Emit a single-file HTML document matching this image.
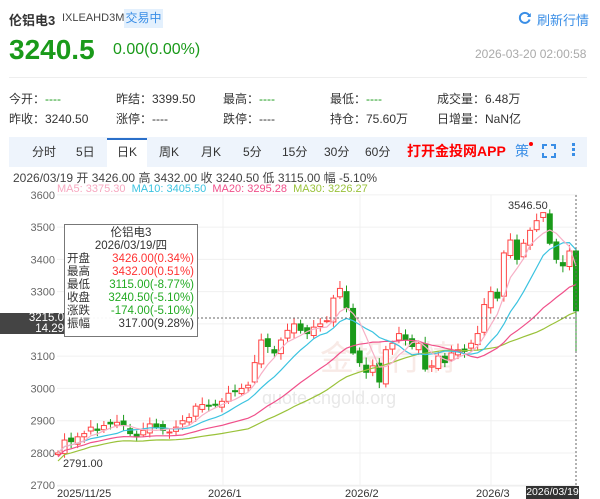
<!DOCTYPE html>
<html><head><meta charset="utf-8"><style>
body{margin:0;width:600px;height:499px;overflow:hidden;background:#fff;font-family:"Liberation Sans","Noto Sans CJK SC",sans-serif;position:relative}
.a{position:absolute;white-space:nowrap}
.g{color:#1a9a1a}
.lbl{font-size:12px;color:#333}
.tab{position:absolute;top:143px;font-size:12px;color:#333}
</style></head><body>
<div class="a" style="left:9px;top:10px;font-size:13px;font-weight:bold;color:#333">伦铝电3</div>
<div class="a" style="left:62px;top:12px;font-size:11px;color:#444">IXLEAHD3M</div>
<div class="a" style="left:124px;top:9px;width:39px;height:19px;background:#e3f0fd;color:#3a8ee6;font-size:12px;line-height:19px;text-align:center">交易中</div>
<svg class="a" style="left:518px;top:11px" width="14" height="14" viewBox="0 0 14 14"><path d="M11.5 5 A5 5 0 1 0 11.6 8.5" fill="none" stroke="#3a8ee6" stroke-width="2"/><path d="M12.8 2 L12.8 6 L8.8 6Z" fill="#3a8ee6"/></svg>
<div class="a" style="left:537px;top:10px;font-size:13px;color:#3a8ee6">刷新行情</div>
<div class="a g" style="left:9px;top:34px;font-size:28px;font-weight:bold">3240.5</div>
<div class="a g" style="left:113px;top:41px;font-size:16px">0.00(0.00%)</div>
<div class="a" style="left:475px;top:47px;font-size:12px;color:#aaa">2026-03-20 02:00:58</div>
<div class="a" style="left:9px;top:77px;width:578px;border-top:1px solid #eee"></div>
<div class="a lbl" style="left:9px;top:90px">今开：<span class="g">----</span></div>
<div class="a lbl" style="left:116px;top:90px">昨结：3399.50</div>
<div class="a lbl" style="left:223px;top:90px">最高：<span class="g">----</span></div>
<div class="a lbl" style="left:330px;top:90px">最低：<span class="g">----</span></div>
<div class="a lbl" style="left:437px;top:90px">成交量：6.48万</div>
<div class="a lbl" style="left:9px;top:110px">昨收：3240.50</div>
<div class="a lbl" style="left:116px;top:110px">涨停：----</div>
<div class="a lbl" style="left:223px;top:110px">跌停：----</div>
<div class="a lbl" style="left:330px;top:110px">持仓：75.60万</div>
<div class="a lbl" style="left:437px;top:110px">日增量：NaN亿</div>
<div class="a" style="left:9px;top:137px;width:578px;height:30px;background:#eef4fc"></div>
<div class="a" style="left:107px;top:138px;width:40px;height:29px;background:#fff;border-top:2px solid #2a6fc9;box-sizing:border-box"></div>
<div class="tab" style="left:32px">分时</div>
<div class="tab" style="left:76px">5日</div>
<div class="tab" style="left:117px">日K</div>
<div class="tab" style="left:159px">周K</div>
<div class="tab" style="left:201px">月K</div>
<div class="tab" style="left:243px">5分</div>
<div class="tab" style="left:282px">15分</div>
<div class="tab" style="left:324px">30分</div>
<div class="tab" style="left:365px">60分</div>
<div class="a" style="left:407px;top:141px;font-size:14px;font-weight:bold;color:#f00">打开金投网APP</div>
<div class="a" style="left:515px;top:141px;font-size:14px;color:#3a8ee6">策</div>
<div class="a" style="left:529px;top:142px;width:4px;height:4px;border-radius:2px;background:#f00"></div>
<svg class="a" style="left:542px;top:144px" width="14" height="14"><path d="M1 5V1H5M9 1H13V5M13 9V13H9M5 13H1V9" fill="none" stroke="#3a8ee6" stroke-width="2"/></svg>
<div class="a" style="left:572px;top:143px;width:3px;height:3px;background:#3a8ee6;box-shadow:0 5px #3a8ee6,0 10px #3a8ee6"></div>
<div class="a" style="left:13px;top:169px;font-size:12px;color:#444">2026/03/19 开 3426.00 高 3432.00 收 3240.50 低 3115.00 幅 -5.10%</div>
<div class="a" style="left:57px;top:183px;font-size:11px"><span style="color:#f7a8c0">MA5: 3375.30</span>&nbsp;&nbsp;<span style="color:#3bc3e0">MA10: 3405.50</span>&nbsp;&nbsp;<span style="color:#f0508a">MA20: 3295.28</span>&nbsp;&nbsp;<span style="color:#9ac23a">MA30: 3226.27</span></div>
<svg class="a" style="left:0;top:0" width="600" height="499" id="ch"></svg>
<div class="a" style="left:64px;top:224px;width:132px;height:111px;background:rgba(255,255,255,.95);border:1px solid #777;font-size:11.5px;line-height:13px;color:#333">
<div style="text-align:center;margin-top:2px">伦铝电3</div>
<div style="text-align:center">2026/03/19/四</div>
<div style="padding:0 3px 0 2px">
<div>开盘<span style="float:right;color:#f33">3426.00(0.34%)</span></div>
<div>最高<span style="float:right;color:#f33">3432.00(0.51%)</span></div>
<div>最低<span style="float:right;color:#2a2">3115.00(-8.77%)</span></div>
<div>收盘<span style="float:right;color:#2a2">3240.50(-5.10%)</span></div>
<div>涨跌<span style="float:right;color:#2a2">-174.00(-5.10%)</span></div>
<div>振幅<span style="float:right">317.00(9.28%)</span></div>
</div></div>
<div class="a" style="left:0;top:313px;width:64px;height:21px;background:#444;color:#fff;font-size:11.5px;line-height:10.5px;text-align:right">3215.0<br>14.29</div>
<div class="a" style="left:526px;top:486px;width:53px;height:13px;background:#333;color:#fff;font-size:10.5px;line-height:13px;text-align:center;overflow:hidden">2026/03/19</div>
<script>
var s=document.getElementById('ch'),h='';
function Y(p){return 251+(3426-p)*0.3226}
h+='<text x="320" y="370" font-size="34" fill="#f3d6cf" opacity=".5" font-family="Noto Sans CJK SC">金投行情</text>';
h+='<text x="262" y="404" font-size="18" fill="#e8e8e8" font-family="Liberation Sans">quote.cngold.org</text>';
[3600,3500,3400,3300,3200,3100,3000,2900,2800,2700].forEach(function(p){var y=Y(p);h+='<line x1="57" x2="577" y1="'+y+'" y2="'+y+'" stroke="#f0f0f0"/><text x="55" y="'+(y+4)+'" font-size="11" fill="#666" text-anchor="end">'+p+'</text>'});
[223,360,491].forEach(function(x){h+='<line x1="'+x+'" x2="'+x+'" y1="195" y2="486" stroke="#f0f0f0"/>'});
h+='<line x1="57" x2="577" y1="486" y2="486" stroke="#eee"/>';
var C=[2800,2840,2835,2850,2860,2880,2870,2885,2890,2895,2885,2860,2850,2870,2890,2880,2870,2865,2880,2900,2910,2945,2950,2945,2950,2960,2985,2990,3000,3010,3080,3150,3130,3110,3150,3180,3200,3180,3170,3190,3200,3210,3280,3310,3250,3110,3080,3050,3070,3020,3120,3140,3170,3150,3130,3140,3060,3070,3100,3080,3110,3120,3115,3140,3170,3260,3300,3280,3420,3460,3400,3450,3490,3520,3545,3450,3400,3380,3426,3240.5];
var O=[2795];for(var i=1;i<C.length;i++)O.push(C[i-1]+((i*37)%11-5)*2);
O[O.length-1]=3426;
var n=C.length,st=(576-58)/(n-1);
function ma(k){var pts=[];for(var i=0;i<n;i++){var a=Math.max(0,i-k+1),t=0;for(var j=a;j<=i;j++)t+=C[j];pts.push((58+i*st).toFixed(1)+','+Y(t/(i-a+1)-(k>20?25:k>10?12:0)).toFixed(1))}return pts.join(' ')}
for(i=0;i<n;i++){var x=58+i*st,o=O[i],c=C[i],up=c>=o,hi=Math.max(o,c)+8+(i*13)%17,lo=Math.min(o,c)-6-(i*7)%15;
if(i==n-1){hi=3432;lo=3115}if(i==74)hi=3546;if(i==0)lo=2791;
var col=up?'#f44':'#1a9a1a',t=Y(Math.max(o,c)),b=Y(Math.min(o,c));if(b-t<1)b=t+1;
h+='<line x1="'+x+'" x2="'+x+'" y1="'+Y(hi)+'" y2="'+Y(lo)+'" stroke="'+col+'"/>';
h+='<rect x="'+(x-2.5)+'" y="'+t+'" width="5" height="'+(b-t)+'" fill="'+(up?'#fff':col)+'" stroke="'+col+'" stroke-width="1"/>'}
h+='<polyline points="'+ma(30)+'" fill="none" stroke="#9ac23a" stroke-width="1.2"/>';
h+='<polyline points="'+ma(20)+'" fill="none" stroke="#f0508a" stroke-width="1.2"/>';
h+='<polyline points="'+ma(10)+'" fill="none" stroke="#3bc3e0" stroke-width="1.2"/>';
h+='<polyline points="'+ma(5)+'" fill="none" stroke="#f7b0c6" stroke-width="1.2"/>';
h+='<line x1="57" x2="577" y1="318" y2="318" stroke="#666" stroke-dasharray="2,2"/><line x1="576" x2="576" y1="195" y2="486" stroke="#666" stroke-dasharray="2,2"/>';
h+='<text x="508" y="209" font-size="11" fill="#333">3546.50</text><text x="63" y="467" font-size="11" fill="#333">2791.00</text>';
h+='<text x="57" y="497" font-size="11" fill="#333">2025/11/25</text><text x="208" y="497" font-size="11" fill="#333">2026/1</text><text x="345" y="497" font-size="11" fill="#333">2026/2</text><text x="476" y="497" font-size="11" fill="#333">2026/3</text>';
s.innerHTML=h;
</script>
</body></html>
